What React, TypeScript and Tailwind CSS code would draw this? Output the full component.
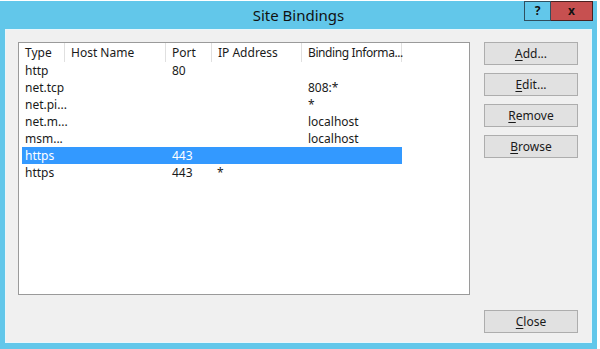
import React from "react";

const font = { fontFamily: '"Noto Sans", "Segoe UI", "Liberation Sans", sans-serif' };

const columns = [
  { label: "Type", w: "w-[46px]" },
  { label: "Host Name", w: "w-[101px]" },
  { label: "Port", w: "w-[46px]" },
  { label: "IP Address", w: "w-[90px]" },
  { label: "Binding Informa...", w: "w-[100px] tracking-[-0.4px]" },
];

const rows = [
  ["http", "", "80", "", ""],
  ["net.tcp", "", "", "", "808:*"],
  ["net.pi...", "", "", "", "*"],
  ["net.m...", "", "", "", "localhost"],
  ["msm...", "", "", "", "localhost"],
  ["https", "", "443", "", ""],
  ["https", "", "443", "*", ""],
];

const SELECTED = 5;

function DlgButton({ mn, rest }: { mn: string; rest: string }) {
  return (
    <button className="h-[23px] w-[94px] border border-[#adadad] bg-[#e1e1e1] text-[12px] leading-none text-[#1a1a1a]">
      <span className="underline underline-offset-2">{mn}</span>
      {rest}
    </button>
  );
}

export default function App() {
  return (
    <div className="h-[349px] w-[600px] overflow-hidden bg-white pt-px" style={font}>
      <div className="flex h-[348px] w-[597px] flex-col bg-[#62c7ea] px-[5px]">
        <div className="relative flex h-[28px] items-center justify-center">
          <span className="text-[15px] text-[#111]">Site Bindings</span>
          <div className="absolute -right-[1px] top-0 flex h-[20px]">
            <div className="flex w-[27px] items-center justify-center border border-[#2f4f5f] bg-[#62c7ea] text-[12px] font-bold text-[#111]">
              ?
            </div>
            <div className="flex w-[42px] items-center justify-center border border-l-0 border-[#4a2020] bg-[#c75050] text-[12px] font-bold text-[#111]">
              x
            </div>
          </div>
        </div>
        <div className="flex h-[314px] border border-[#e8f6fb] bg-[#f0f0f0] pb-[9px] pl-[12px] pr-[13px] pt-[12px]">
          <div className="flex h-[253px] w-[452px] flex-col border border-[#9a9a9a] bg-white">
            <div className="flex h-[19px]">
              {columns.map((c) => (
                <div
                  key={c.label}
                  className={`${c.w} flex items-center whitespace-nowrap border-r border-[#e0e0e0] pl-[6px] text-[12px] text-[#1a1a1a]`}
                >
                  {c.label}
                </div>
              ))}
            </div>
            {rows.map((r, i) => (
              <div
                key={i}
                className={`ml-[3px] flex h-[17px] w-[380px] items-center text-[12px] ${
                  i === SELECTED ? "bg-[#3399ff] text-white" : "text-[#1a1a1a]"
                }`}
              >
                <div className="w-[43px] whitespace-nowrap pl-[3px]">{r[0]}</div>
                <div className="w-[101px] pl-[6px]">{r[1]}</div>
                <div className="w-[46px] pl-[6px]">{r[2]}</div>
                <div className="w-[90px] pl-[5px]">{r[3]}</div>
                <div className="w-[100px] pl-[6px]">{r[4]}</div>
              </div>
            ))}
          </div>
          <div className="ml-[14px] flex flex-col justify-between">
            <div className="flex flex-col gap-[8px]">
              <DlgButton mn="A" rest="dd..." />
              <DlgButton mn="E" rest="dit..." />
              <DlgButton mn="R" rest="emove" />
              <DlgButton mn="B" rest="rowse" />
            </div>
            <DlgButton mn="C" rest="lose" />
          </div>
        </div>
      </div>
    </div>
  );
}
